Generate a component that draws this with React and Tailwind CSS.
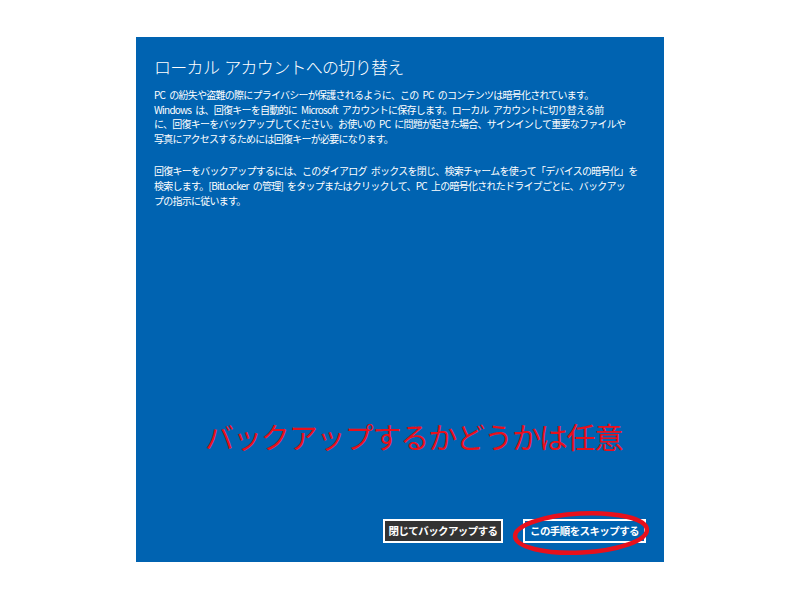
const para1 = [
  'PC の紛失や盗難の際にプライバシーが保護されるように、この PC のコンテンツは暗号化されています。',
  'Windows は、回復キーを自動的に Microsoft アカウントに保存します。ローカル アカウントに切り替える前',
  'に、回復キーをバックアップしてください。お使いの PC に問題が起きた場合、サインインして重要なファイルや',
  '写真にアクセスするためには回復キーが必要になります。',
];

const para2 = [
  '回復キーをバックアップするには、このダイアログ ボックスを閉じ、検索チャームを使って「デバイスの暗号化」を',
  '検索します。[BitLocker の管理] をタップまたはクリックして、PC 上の暗号化されたドライブごとに、バックアッ',
  'プの指示に従います。',
];

function Lines({ lines, className = '' }) {
  return (
    <div className={className}>
      {lines.map((l, i) => (
        <div key={i} className="whitespace-pre leading-[14.6px]">
          {l}
        </div>
      ))}
    </div>
  );
}

export default function App() {
  return (
    <div
      className="w-[800px] h-[600px] bg-white flex justify-center pt-[37px]"
      style={{ fontFamily: '"Noto Sans CJK JP", "Noto Sans", sans-serif' }}
    >
      <div className="relative w-[528px] h-[525px] bg-[#0063b1] text-white flex flex-col px-[18px] pt-[18px] pb-[19px]">
        <h1 className="text-[17px] leading-[24px] font-light tracking-[-0.7px] [word-spacing:2px] whitespace-nowrap">
          ローカル アカウントへの切り替え
        </h1>

        <div className="mt-[9px] text-[10px] tracking-[-0.75px] [word-spacing:2.5px]">
          <Lines lines={para1} />
          <Lines lines={para2} className="mt-[18px]" />
        </div>

        <div className="flex-1 flex items-end pl-[51px] pb-[67px]">
          <div className="text-[29px] leading-[32px] tracking-[-1.1px] text-[#e8101c] whitespace-nowrap">
            バックアップするかどうかは任意
          </div>
        </div>

        <div className="flex justify-end gap-[20px]">
          <button className="w-[120px] h-[24px] bg-[#333333] border-2 border-white text-[10.5px] font-bold tracking-[-0.6px] text-white flex items-center justify-center">
            閉じてバックアップする
          </button>
          <button className="w-[123px] h-[24px] bg-[#0063b1] border-2 border-white text-[10.5px] font-bold tracking-[-0.6px] text-white flex items-center justify-center">
            この手順をスキップする
          </button>
        </div>

        <svg
          className="absolute left-[370px] top-[470px] pointer-events-none"
          width="150"
          height="52"
          viewBox="0 0 150 52"
        >
          <ellipse
            cx="75"
            cy="26"
            rx="66"
            ry="19.5"
            fill="none"
            stroke="#e8101c"
            strokeWidth="4.5"
            transform="rotate(-3 75 26)"
          />
        </svg>
      </div>
    </div>
  );
}
